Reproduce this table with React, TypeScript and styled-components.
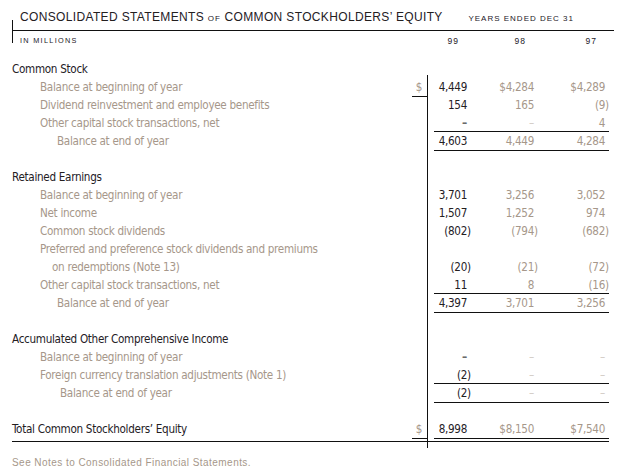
import React from "react";
import styled, { createGlobalStyle } from "styled-components";

const INK = "#24201f";
const TAUPE = "#a6978a";
const LINE = "#111111";

const Global = createGlobalStyle`
  html, body { margin: 0; padding: 0; background: #ffffff; }
  body { font-family: "Liberation Sans", Arial, sans-serif; color: ${INK}; }
`;

const Page = styled.div`
  width: 622px;
  box-sizing: border-box;
  padding: 0 8px 0 12px;
`;

const Header = styled.header`
  background: linear-gradient(${LINE}, ${LINE}) no-repeat 0 20px / 1px 23px;
`;

const TitleBar = styled.div`
  height: 31px;
  box-sizing: border-box;
  border-bottom: 1px solid ${LINE};
  padding: 10px 40px 0 8px;
  display: flex;
  align-items: baseline;
  justify-content: space-between;
  line-height: 14px;
`;

const Title = styled.h1`
  margin: 0;
  flex: none;
  font-weight: normal;
  font-size: 12px;
  letter-spacing: 0.35px;
  color: ${INK};
  white-space: nowrap;
`;

const Small = styled.span`
  font-size: 8px;
  letter-spacing: 1px;
`;

const Years = styled.span`
  flex: none;
  font-size: 8px;
  letter-spacing: 1px;
  color: ${INK};
  white-space: nowrap;
`;

const Grid = styled.div`
  display: grid;
  grid-template-columns: 400px 15px 7px 37px 67px 71px 5px;
`;

const SubHead = styled(Grid)`
  padding-top: 4px;
  line-height: 12px;
  margin-bottom: 13px;
`;

const Units = styled.span`
  grid-column: 1 / 4;
  padding-left: 8px;
  font-size: 7.3px;
  letter-spacing: 1.3px;
`;

const YearHead = styled.span`
  text-align: right;
  padding-right: 12px;
  font-size: 8.5px;
  letter-spacing: 1px;
`;

const Row = styled(Grid)`
  height: 18px;
  line-height: 18px;
  font-family: "DejaVu Sans Condensed", "DejaVu Sans", sans-serif;
  font-stretch: condensed;
  font-size: 11.6px;
  letter-spacing: -0.3px;
`;

const Label = styled.div<{ $indent: number; $strong?: boolean }>`
  padding-left: ${(p) => p.$indent}px;
  color: ${(p) => (p.$strong ? INK : TAUPE)};
  white-space: nowrap;
`;

const Dollar = styled.div<{ $mark?: boolean }>`
  box-sizing: border-box;
  text-align: right;
  padding-right: 5px;
  color: ${TAUPE};
  border-bottom: 1px solid ${(p) => (p.$mark ? LINE : "transparent")};
`;

const Rule = styled.div<{ $from?: number }>`
  background: linear-gradient(${LINE}, ${LINE}) no-repeat 0 ${(p) => p.$from ?? 0}px / 1px 100%;
`;

const Num = styled.div<{ $first?: boolean; $boxed?: boolean; $under?: boolean }>`
  box-sizing: border-box;
  text-align: right;
  padding-right: 4px;
  white-space: nowrap;
  color: ${(p) => (p.$first ? INK : TAUPE)};
  ${(p) =>
    p.$boxed
      ? `height: 20px; margin-top: -1px; line-height: 18px; border-top: 1px solid ${LINE}; border-bottom: 1px solid ${LINE};`
      : ""}
  ${(p) => (p.$under ? `border-bottom: 1px solid ${LINE};` : "")}
`;

const Dash = styled.span<{ $first?: boolean }>`
  color: ${(p) => (p.$first ? "#6a6a6a" : "#d3ccc6")};
  font-weight: ${(p) => (p.$first ? "bold" : "normal")};
`;

const Hang = styled.span`
  display: inline-block;
  width: 0;
`;

const Tail = styled(Grid)`
  height: 10px;
`;

const TailLine = styled.div`
  background: linear-gradient(${LINE}, ${LINE}) no-repeat 0 3px / 100% 1px;
`;

const TailRule = styled.div`
  background:
    linear-gradient(${LINE}, ${LINE}) no-repeat 0 3px / 100% 1px,
    linear-gradient(${LINE}, ${LINE}) no-repeat 0 0 / 1px 100%;
`;

const Note = styled.p`
  margin: 0;
  padding-top: 9px;
  line-height: 12px;
  font-size: 10px;
  letter-spacing: 0.45px;
  color: ${TAUPE};
`;

type Line = {
  label: string;
  indent: number;
  strong?: boolean;
  vals?: string[];
  dollar?: boolean;
  boxed?: boolean;
  ruleFrom?: number;
};

const lines: (Line | null)[] = [
  { label: "Common Stock", indent: 0, strong: true, ruleFrom: 15 },
  { label: "Balance at beginning of year", indent: 28, dollar: true, vals: ["4,449", "$4,284", "$4,289"] },
  { label: "Dividend reinvestment and employee benefits", indent: 28, vals: ["154", "165", "(9)"] },
  { label: "Other capital stock transactions, net", indent: 28, vals: ["–", "–", "4"] },
  { label: "Balance at end of year", indent: 45, boxed: true, vals: ["4,603", "4,449", "4,284"] },
  null,
  { label: "Retained Earnings", indent: 0, strong: true },
  { label: "Balance at beginning of year", indent: 28, vals: ["3,701", "3,256", "3,052"] },
  { label: "Net income", indent: 28, vals: ["1,507", "1,252", "974"] },
  { label: "Common stock dividends", indent: 28, vals: ["(802)", "(794)", "(682)"] },
  { label: "Preferred and preference stock dividends and premiums", indent: 28 },
  { label: "on redemptions (Note 13)", indent: 40, vals: ["(20)", "(21)", "(72)"] },
  { label: "Other capital stock transactions, net", indent: 28, vals: ["11", "8", "(16)"] },
  { label: "Balance at end of year", indent: 45, boxed: true, vals: ["4,397", "3,701", "3,256"] },
  null,
  { label: "Accumulated Other Comprehensive Income", indent: 0, strong: true },
  { label: "Balance at beginning of year", indent: 28, vals: ["–", "–", "–"] },
  { label: "Foreign currency translation adjustments (Note 1)", indent: 28, vals: ["(2)", "–", "–"] },
  { label: "Balance at end of year", indent: 48, boxed: true, vals: ["(2)", "–", "–"] },
  null,
];

function Value({ v, first }: { v: string; first: boolean }) {
  if (v === "–") return <Dash $first={first}>–</Dash>;
  if (v.endsWith(")"))
    return (
      <>
        {v.slice(0, -1)}
        <Hang>)</Hang>
      </>
    );
  return <>{v}</>;
}

export default function App() {
  return (
    <Page>
      <Global />
      <Header>
        <TitleBar>
          <Title>
            CONSOLIDATED STATEMENTS <Small>OF</Small> COMMON STOCKHOLDERS’ EQUITY
          </Title>
          <Years>YEARS ENDED DEC 31</Years>
        </TitleBar>
        <SubHead>
          <Units>IN MILLIONS</Units>
          <YearHead>99</YearHead>
          <YearHead>98</YearHead>
          <YearHead>97</YearHead>
        </SubHead>
      </Header>

      {lines.map((l, i) => (
        <Row key={i}>
          <Label $indent={l?.indent ?? 0} $strong={l?.strong}>
            {l?.label ?? ""}
          </Label>
          <Dollar $mark={l?.dollar}>{l?.dollar ? "$" : ""}</Dollar>
          <Rule $from={l?.ruleFrom} />
          {[0, 1, 2].map((c) => (
            <Num key={c} $first={c === 0} $boxed={l?.boxed}>
              {l?.vals ? <Value v={l.vals[c]} first={c === 0} /> : null}
            </Num>
          ))}
          <div />
        </Row>
      ))}

      <Row>
        <Label $indent={0} $strong>
          Total Common Stockholders’ Equity
        </Label>
        <Dollar $mark>$</Dollar>
        <Rule />
        <Num $first $under>8,998</Num>
        <Num $under>$8,150</Num>
        <Num $under>$7,540</Num>
        <div />
      </Row>
      <Tail>
        <TailLine />
        <TailLine />
        <TailRule />
        <TailLine />
        <TailLine />
        <TailLine />
        <div />
      </Tail>

      <Note>See Notes to Consolidated Financial Statements.</Note>
    </Page>
  );
}
